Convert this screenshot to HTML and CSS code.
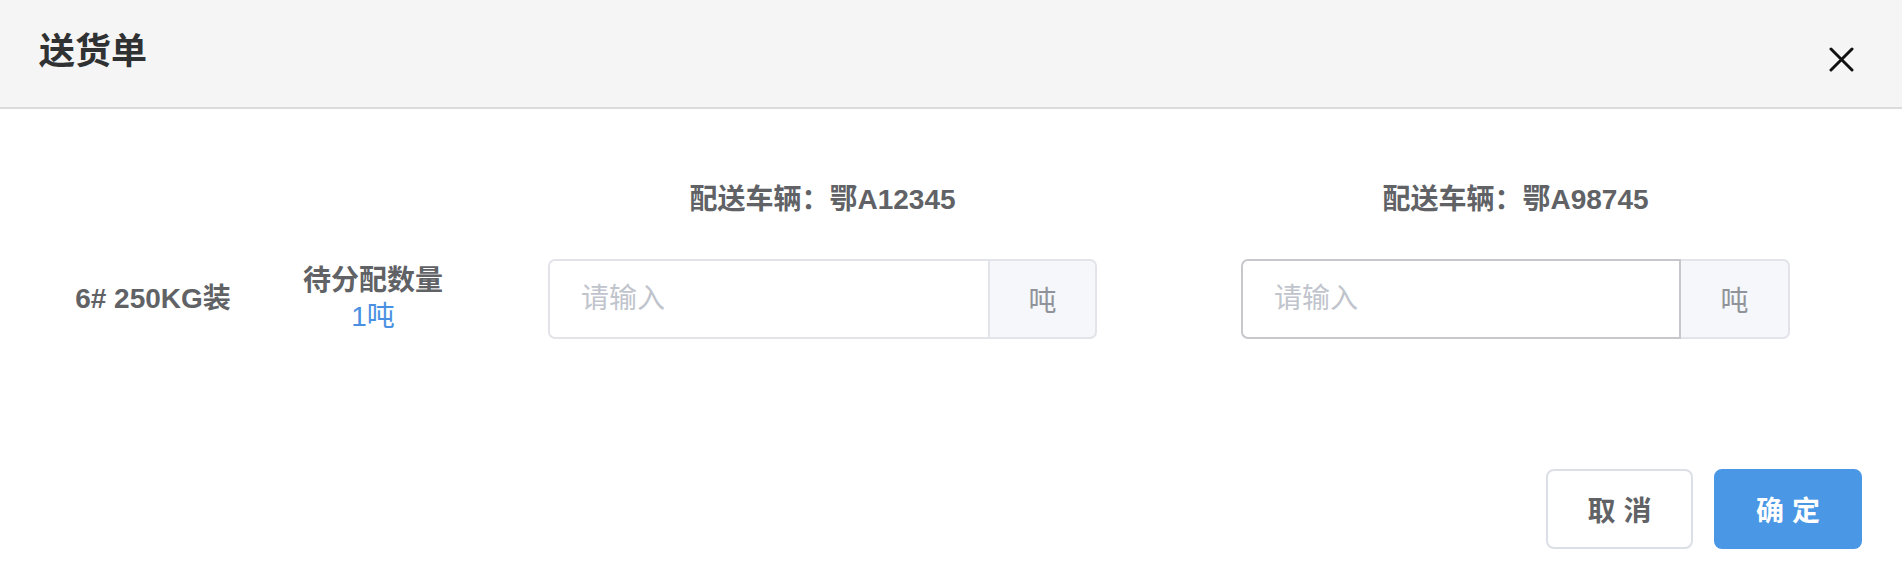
FILE: index.html
```html
<!DOCTYPE html>
<html lang="zh-CN">
<head>
<meta charset="utf-8">
<title>送货单</title>
<link rel="stylesheet" href="styles.css">
</head>
<body>
<div class="dialog">
  <header class="dialog-header">
    <h1 class="dialog-title">送货单</h1>
    <button class="close-btn" aria-label="关闭">
      <svg width="25" height="25" viewBox="0 0 25 25"><path d="M2 2 L23 23 M23 2 L2 23" stroke="#111" stroke-width="3" stroke-linecap="round" fill="none"/></svg>
    </button>
  </header>
  <main class="dialog-body">
    <div class="alloc-grid">
      <div class="cell-empty"></div>
      <div class="cell-empty"></div>
      <div class="vehicle-head vh-1">配送车辆：鄂A12345</div>
      <div class="vehicle-head vh-2">配送车辆：鄂A98745</div>

      <div class="item-name">6# 250KG装</div>
      <div class="qty">
        <div class="qty-label">待分配数量</div>
        <div class="qty-value">1吨</div>
      </div>
      <div class="input-group">
        <input class="input-field" type="text" placeholder="请输入">
        <span class="input-addon">吨</span>
      </div>
      <div class="input-group hovered">
        <input class="input-field" type="text" placeholder="请输入">
        <span class="input-addon">吨</span>
      </div>
    </div>
  </main>
  <footer class="dialog-footer">
    <button class="btn btn-default">取 消</button>
    <button class="btn btn-primary">确 定</button>
  </footer>
</div>
</body>
</html>
```

FILE: styles.css
```css
* { box-sizing: border-box; }
html, body {
  margin: 0;
  padding: 0;
  background: #ffffff;
  font-family: "Liberation Sans", "Noto Sans CJK SC", sans-serif;
  color: #606266;
}
.dialog {
  width: 1902px;
  height: 588px;
  display: flex;
  flex-direction: column;
}
.dialog-header {
  height: 109px;
  background: #f5f5f5;
  border-bottom: 2px solid #dcdcdc;
  display: flex;
  align-items: center;
  justify-content: space-between;
  padding: 0 48px 0 39px;
}
.dialog-title {
  margin: 0 0 4px 0;
  font-size: 36px;
  line-height: 44px;
  font-weight: 700;
  color: #303133;
}
.close-btn {
  border: 0;
  background: transparent;
  padding: 0;
  width: 25px;
  height: 25px;
  margin-top: 12px;
  display: flex;
}
.dialog-body {
  padding: 71px 0 0 40px;
}
.alloc-grid {
  display: grid;
  grid-template-columns: 226px 214px 617px 693px;
  grid-template-rows: 40px 80px;
  row-gap: 39px;
  align-items: center;
}
.vehicle-head {
  justify-self: end;
  width: 549px;
  text-align: center;
  font-size: 28px;
  line-height: 40px;
  font-weight: 700;
  color: #606266;
}
.item-name {
  text-align: center;
  font-size: 28px;
  font-weight: 700;
  line-height: 40px;
  color: #606266;
}
.qty {
  text-align: center;
  line-height: 36px;
  font-size: 28px;
}
.qty-label {
  font-weight: 700;
  color: #606266;
}
.qty-value {
  color: #4a90e2;
}
.input-group {
  justify-self: end;
  width: 549px;
  height: 80px;
  display: flex;
}
.input-field {
  flex: 1;
  min-width: 0;
  height: 80px;
  border: 2px solid #e2e4e9;
  border-right: 0;
  border-radius: 7px 0 0 7px;
  padding: 0 31px;
  font-family: inherit;
  font-size: 28px;
  color: #606266;
  background: #fff;
  outline: none;
}
.input-field::placeholder {
  color: #c0c4cc;
}
.input-addon {
  width: 109px;
  height: 80px;
  background: #f5f7fa;
  border: 2px solid #e2e4e9;
  border-radius: 0 7px 7px 0;
  display: flex;
  align-items: center;
  justify-content: center;
  font-size: 28px;
  color: #909399;
}
.hovered .input-field {
  border-color: #c6c8cd;
  border-right: 2px solid #c6c8cd;
}
.hovered .input-addon {
  border-left: 0;
}
.dialog-footer {
  margin-top: auto;
  padding: 0 40px 39px 0;
  display: flex;
  justify-content: flex-end;
  gap: 21px;
}
.btn {
  height: 80px;
  border-radius: 8px;
  font-family: inherit;
  font-size: 28px;
  font-weight: 700;
  padding: 0;
  cursor: pointer;
}
.btn-default {
  width: 147px;
  background: #fff;
  border: 2px solid #dcdfe6;
  color: #606266;
}
.btn-primary {
  width: 148px;
  background: #4a97e5;
  border: 2px solid #4a97e5;
  color: #fff;
}
```
